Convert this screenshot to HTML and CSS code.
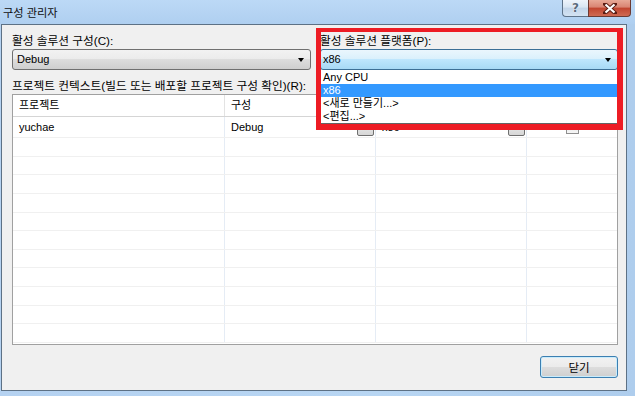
FILE: index.html
```html
<!DOCTYPE html>
<html lang="ko">
<head>
<meta charset="utf-8">
<title>구성 관리자</title>
<link rel="stylesheet" href="styles.css">
</head>
<body>
<div class="window">
  <div class="titlebar">
    <span class="title">구성 관리자</span>
    <div class="caption-btns">
      <div class="cbtn help"><span class="qmark">?</span></div>
      <div class="cbtn close">
        <svg width="14" height="11" viewBox="0 0 14 11"><path d="M2 1 L12 10 M12 1 L2 10" stroke="#5a1d14" stroke-width="4" stroke-linecap="square"/><path d="M2.5 1.5 L11.5 9.5 M11.5 1.5 L2.5 9.5" stroke="#fff" stroke-width="2.2"/></svg>
      </div>
    </div>
  </div>
  <div class="client">
    <div class="selectors">
      <div class="field">
        <div class="label">활성 솔루션 구성(C):</div>
        <div class="combo"><span>Debug</span><i class="arrow"></i></div>
      </div>
      <div class="field">
        <div class="label">활성 솔루션 플랫폼(P):</div>
        <div class="combo open"><span>x86</span><i class="arrow"></i></div>
        <ul class="dropdown">
          <li>Any CPU</li>
          <li class="sel">x86</li>
          <li>&lt;새로 만들기...&gt;</li>
          <li>&lt;편집...&gt;</li>
        </ul>
      </div>
    </div>
    <div class="label grid-label">프로젝트 컨텍스트(빌드 또는 배포할 프로젝트 구성 확인)(R):</div>
    <div class="grid">
      <div class="row head">
        <div class="cell">프로젝트</div>
        <div class="cell">구성</div>
        <div class="cell"></div>
        <div class="cell"></div>
      </div>
      <div class="row first">
        <div class="cell">yuchae</div>
        <div class="cell incombo">Debug<i class="cellbtn"></i></div>
        <div class="cell incombo">x86<i class="cellbtn"></i></div>
        <div class="cell check"><i class="checkbox"></i></div>
      </div>
      <div class="row"><div class="cell"></div><div class="cell"></div><div class="cell"></div><div class="cell"></div></div>
      <div class="row"><div class="cell"></div><div class="cell"></div><div class="cell"></div><div class="cell"></div></div>
      <div class="row"><div class="cell"></div><div class="cell"></div><div class="cell"></div><div class="cell"></div></div>
      <div class="row"><div class="cell"></div><div class="cell"></div><div class="cell"></div><div class="cell"></div></div>
      <div class="row"><div class="cell"></div><div class="cell"></div><div class="cell"></div><div class="cell"></div></div>
      <div class="row"><div class="cell"></div><div class="cell"></div><div class="cell"></div><div class="cell"></div></div>
      <div class="row"><div class="cell"></div><div class="cell"></div><div class="cell"></div><div class="cell"></div></div>
      <div class="row"><div class="cell"></div><div class="cell"></div><div class="cell"></div><div class="cell"></div></div>
      <div class="row"><div class="cell"></div><div class="cell"></div><div class="cell"></div><div class="cell"></div></div>
      <div class="row"><div class="cell"></div><div class="cell"></div><div class="cell"></div><div class="cell"></div></div>
      <div class="row"><div class="cell"></div><div class="cell"></div><div class="cell"></div><div class="cell"></div></div>
    </div>
    <div class="footer">
      <button class="btn">닫기</button>
    </div>
    <div class="highlight"></div>
  </div>
</div>
</body>
</html>
```

FILE: styles.css
```css
* { box-sizing: border-box; }
html, body { margin: 0; padding: 0; }
body {
  width: 635px;
  height: 396px;
  overflow: hidden;
  font-family: "Liberation Sans", "Noto Sans CJK KR", sans-serif;
  font-size: 11px;
  color: #000;
  background: #b4d0ee;
}
.window {
  width: 635px;
  height: 396px;
  display: flex;
  flex-direction: column;
  background: linear-gradient(90deg, #b5d2f1 0%, #b8d6f3 60%, #aecded 100%);
}
.titlebar {
  height: 24px;
  flex: none;
  display: flex;
  align-items: flex-start;
  padding-right: 4px;
  background: linear-gradient(180deg, #bcd9f6 0%, #afcff0 100%);
}
.title {
  padding: 6px 0 0 3px;
  font-size: 11.2px;
  line-height: 15px;
  color: #101010;
}
.caption-btns {
  margin-left: auto;
  display: flex;
}
.cbtn {
  height: 17px;
  display: flex;
  align-items: center;
  justify-content: center;
  border: 1px solid #5e7389;
  border-top: none;
}
.help {
  width: 26px;
  border-right: none;
  border-bottom-left-radius: 4px;
  background: linear-gradient(180deg, #eef4fb 0%, #d9e6f3 45%, #c3d5e9 50%, #d3e3f3 100%);
}
.qmark {
  font-family: "DejaVu Sans", sans-serif;
  font-weight: bold;
  font-size: 12px;
  line-height: 12px;
  color: #5b6b7c;
  text-shadow: 0 0 1px #fff, 0 0 1px #fff;
}
.close {
  width: 43px;
  border-color: #6b3a33;
  border-bottom-right-radius: 4px;
  background: linear-gradient(180deg, #e8a997 0%, #d98472 45%, #c1442e 50%, #cf6a52 100%);
}
.client {
  flex: 1;
  position: relative;
  margin: 0 8px 5px 1px;
  border: 1px solid #5d7185;
  background: #f0f0f0;
  padding: 8px 8px 12px 10px;
  display: flex;
  flex-direction: column;
}
.label {
  height: 16px;
  line-height: 16px;
  font-size: 11.7px;
  white-space: nowrap;
}
.selectors {
  display: grid;
  grid-template-columns: 299px 1fr;
  column-gap: 9px;
}
.field { position: relative; }
.combo {
  position: relative;
  height: 21px;
  border: 1px solid #707070;
  border-radius: 3px;
  background: linear-gradient(180deg, #f2f2f2 0%, #ebebeb 50%, #dddddd 50%, #cfcfcf 100%);
  padding-left: 4px;
  line-height: 19px;
}
.combo.open {
  border-color: #3c6f96;
  background: linear-gradient(180deg, #eaf6fd 0%, #d9f0fc 50%, #bee6fd 50%, #a7d9f5 100%);
  padding-left: 2px;
}
.arrow {
  position: absolute;
  right: 6px;
  top: 8px;
  width: 0;
  height: 0;
  border-left: 3.5px solid transparent;
  border-right: 3.5px solid transparent;
  border-top: 4px solid #000;
}
.dropdown {
  position: absolute;
  left: 0;
  right: 0;
  top: 100%;
  margin: 0;
  padding: 1px 0 0 0;
  list-style: none;
  background: #fff;
  border: 1px solid #646464;
  border-top: none;
  z-index: 2;
}
.dropdown li {
  height: 13px;
  line-height: 13px;
  padding-left: 2px;
  white-space: nowrap;
}
.dropdown li.sel {
  background: #3399ff;
  color: #fff;
}
.grid-label { margin-top: 8px; }
.grid {
  height: 251px;
  border: 1px solid #a0a0a0;
  background: #fff;
  overflow: hidden;
}
.row {
  display: grid;
  grid-template-columns: 212px 151px 151px 1fr;
  height: 18.64px;
  border-bottom: 1px solid #f0f0f0;
}
.row .cell {
  border-right: 1px solid #e5ecf5;
  padding-left: 6px;
  line-height: 18px;
  white-space: nowrap;
  position: relative;
}
.row .cell:last-child { border-right: none; }
.row.head {
  height: 22px;
  border-bottom: 1px solid #d5d5d5;
}
.row.head .cell {
  line-height: 21px;
  border-right-color: #e3e3e3;
}
.row.first { height: 21px; }
.row.first .cell { line-height: 20px; }
.cellbtn {
  position: absolute;
  right: 1px;
  top: 2px;
  width: 17px;
  height: 17px;
  border: 1px solid #6f6f6f;
  border-radius: 2px;
  background: linear-gradient(180deg, #f2f2f2 0%, #e4e4e4 50%, #d6d6d6 100%);
}
.cell.check {
  display: flex;
  justify-content: center;
  padding-left: 0;
}
.checkbox {
  margin-top: 4px;
  width: 13px;
  height: 13px;
  border: 1px solid #8f8f8f;
  background: linear-gradient(180deg, #dedede, #f6f6f6);
}
.footer {
  margin-top: 11px;
  display: flex;
  justify-content: flex-end;
}
.btn {
  width: 78px;
  height: 22px;
  margin: 0;
  padding: 0;
  font-family: inherit;
  font-size: 11.5px;
  border: 1px solid #3c7fb1;
  border-radius: 3px;
  box-shadow: inset 0 0 0 1px #c9ecfc;
  background: linear-gradient(180deg, #f2f2f2 0%, #ebebeb 50%, #dddddd 50%, #cfcfcf 100%);
}
.highlight {
  position: absolute;
  left: 314px;
  top: 3px;
  width: 307px;
  height: 102px;
  border-style: solid;
  border-color: #ed1c24;
  border-width: 4px 6px 6px 5px;
  z-index: 3;
  pointer-events: none;
}
```
